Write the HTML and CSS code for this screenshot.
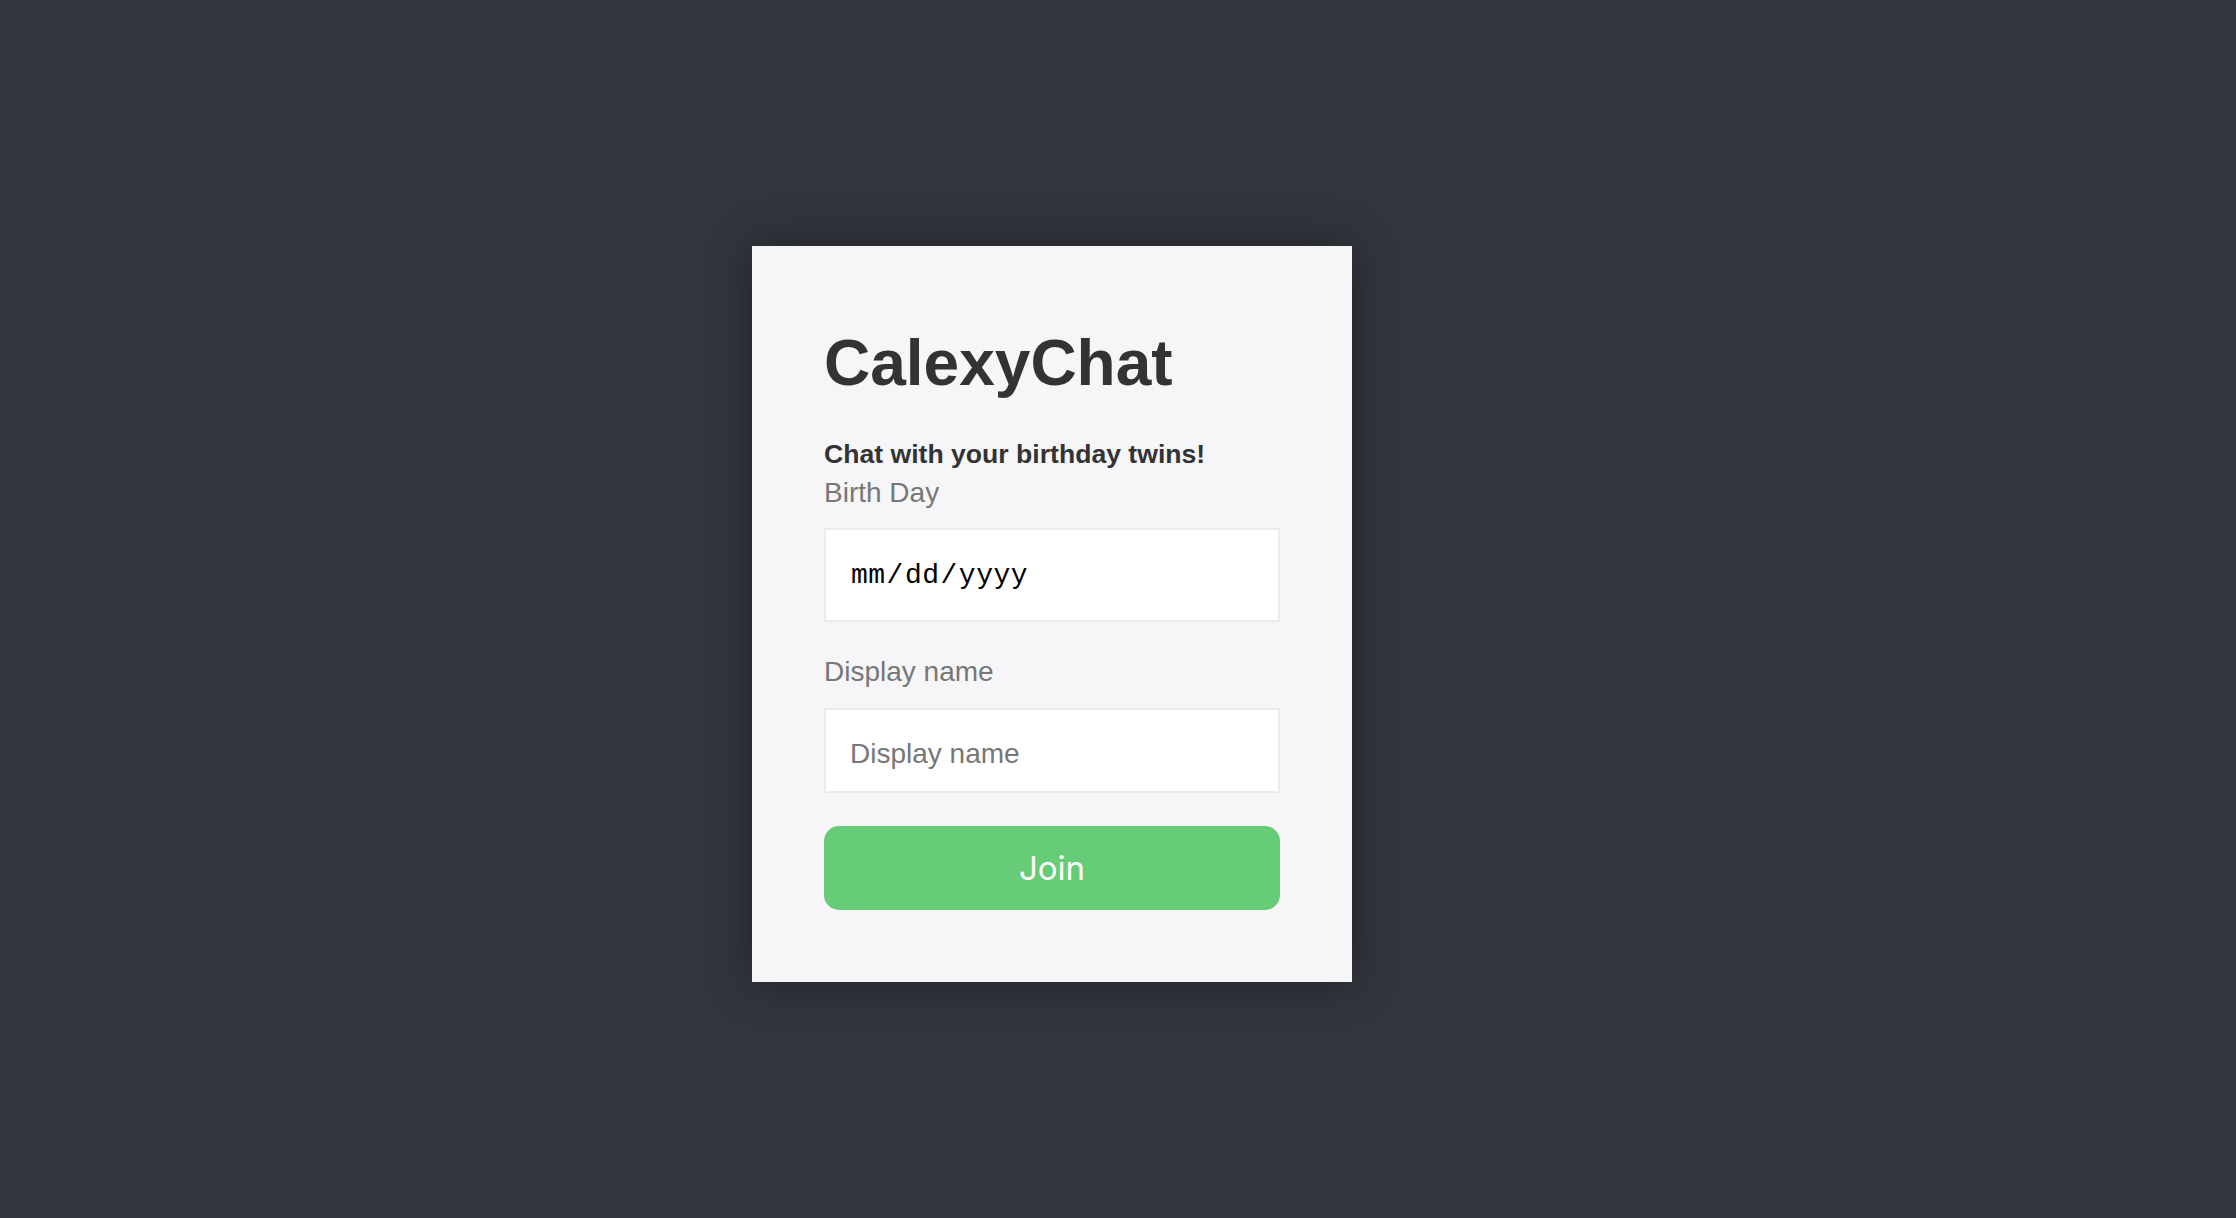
FILE: index.html
```html
<!DOCTYPE html>
<html lang="en">
<head>
<meta charset="utf-8">
<title>CalexyChat</title>
<link rel="stylesheet" href="styles.css">
</head>
<body>
<main class="stage">
  <form class="card">
    <h1 class="title">CalexyChat</h1>
    <p class="tagline">Chat with your birthday twins!</p>
    <label class="field-label label-birth" for="bday">Birth Day</label>
    <input class="field field-date" id="bday" type="date">
    <label class="field-label label-name" for="dname">Display name</label>
    <input class="field field-text" id="dname" type="text" placeholder="Display name">
    <button class="join" type="button">Join</button>
  </form>
</main>
</body>
</html>
```

FILE: styles.css
```css
html, body {
  margin: 0;
  padding: 0;
}

body {
  background: #32353c;
  font-family: "Liberation Sans", Arial, sans-serif;
}

.stage {
  box-sizing: border-box;
  min-height: 100vh;
  display: flex;
  align-items: center;
  justify-content: center;
  padding: 10px 132px 0 0;
}

.card {
  box-sizing: border-box;
  width: 600px;
  padding: 72px;
  background: #f6f6f8;
  box-shadow: 0 0 40px rgba(0, 0, 0, 0.35);
  display: flex;
  flex-direction: column;
}

.title {
  margin: 13px 0 0;
  font-size: 64px;
  line-height: 64px;
  font-weight: 700;
  color: #333333;
}

.tagline {
  margin: 43px 0 0;
  font-size: 26.6px;
  line-height: 32px;
  font-weight: 700;
  color: #333333;
}

.field-label {
  display: block;
  font-size: 28px;
  line-height: 32px;
  color: #777777;
}

.label-birth {
  margin: 7px 0 19px;
}

.label-name {
  margin: 34px 0 20px;
}

.field {
  box-sizing: border-box;
  width: 100%;
  margin: 0;
  border: 2px solid #ececec;
  border-radius: 0;
  background: #ffffff;
  outline: none;
  padding: 0 24px;
}

.field-date {
  height: 94px;
  font-family: "Liberation Mono", "Courier New", monospace;
  font-size: 28px;
  letter-spacing: 0.5px;
  color: #000000;
}

.field-date::-webkit-calendar-picker-indicator {
  display: none;
}

.field-text {
  height: 85px;
  padding-top: 6px;
  font-family: "Liberation Sans", Arial, sans-serif;
  font-size: 28px;
  color: #333333;
}

.field-text::placeholder {
  color: #777777;
}

.join {
  margin-top: 33px;
  height: 84px;
  border: none;
  border-radius: 15px;
  background: #66cc77;
  color: #ffffff;
  font-family: Inter, "Liberation Sans", sans-serif;
  font-size: 33px;
  cursor: pointer;
}
```
